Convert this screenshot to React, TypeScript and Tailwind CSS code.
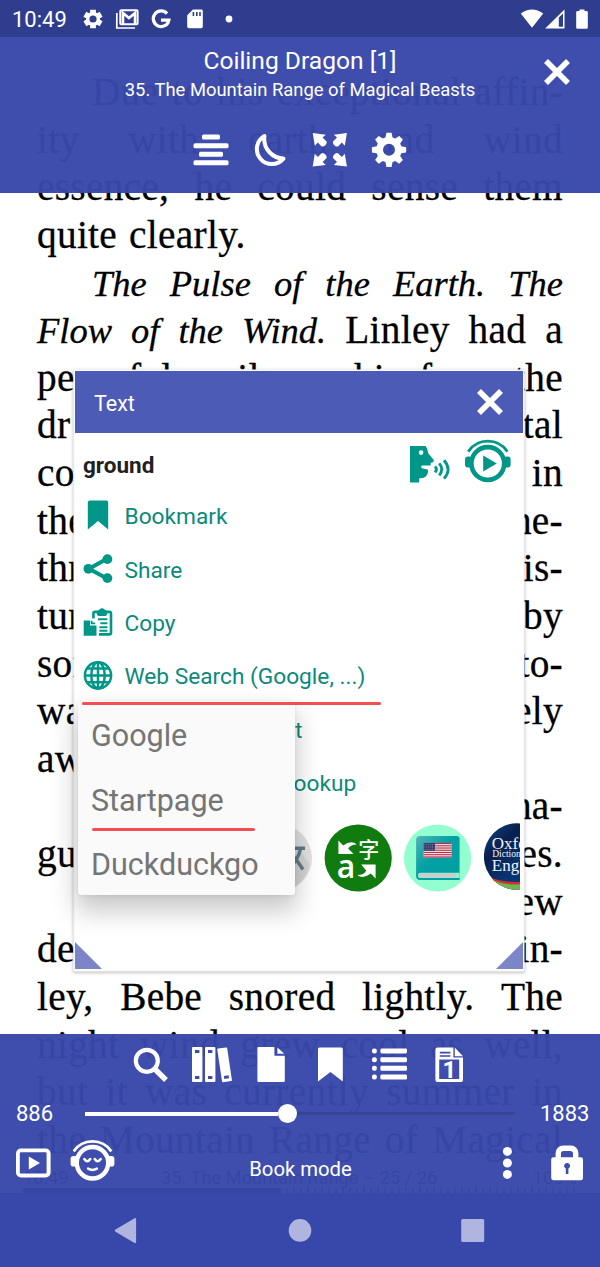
import React from "react";

type Kids = { children?: React.ReactNode };

/* Icon canvas whose origin is the middle of the box. */
function Icon({ w = 60, h = 50, children, className = "" }: Kids & { w?: number; h?: number; className?: string }) {
  return (
    <svg width={w} height={h} viewBox={`${-w / 2} ${-h / 2} ${w} ${h}`} fill="currentColor" className={`block shrink-0 ${className}`}>
      {children}
    </svg>
  );
}

function gearPath(teeth: number, outer: number, inner: number, topHalf: number, baseHalf: number) {
  const pts: string[] = [];
  for (let i = 0; i < teeth; i++) {
    const a = (i * 2 * Math.PI) / teeth - Math.PI / 2;
    const add = (r: number, d: number) => pts.push(`${(r * Math.cos(a + d)).toFixed(2)} ${(r * Math.sin(a + d)).toFixed(2)}`);
    add(inner, -baseHalf);
    add(outer, -topHalf);
    add(outer, topHalf);
    add(inner, baseHalf);
  }
  return `M${pts.join("L")}Z`;
}

function CloseIcon() {
  return (
    <Icon w={30} h={30}>
      <path d="M-11 -11L11 11M11 -11L-11 11" stroke="currentColor" strokeWidth="5.6" fill="none" />
    </Icon>
  );
}

function Headphones({ children }: Kids) {
  return (
    <>
      <circle cx="0" cy="2.5" r="16.4" fill="none" stroke="currentColor" strokeWidth="4.6" />
      <path d="M-19.6 -9.4A23.7 23.7 0 0 1 19.6 -9.4" fill="none" stroke="currentColor" strokeWidth="2.8" />
      <rect x="-22.8" y="-4.6" width="7" height="11" rx="3" />
      <rect x="15.8" y="-4.6" width="7" height="11" rx="3" />
      {children}
    </>
  );
}

const rowCls = "h-[47.625px] w-full flex justify-between whitespace-pre";

function Line({ text, indent, italic, last }: { text: string; indent?: boolean; italic?: boolean; last?: boolean }) {
  return (
    <div className={`${rowCls} ${indent ? "pl-[55px]" : ""} ${italic ? "text-[36.5px] italic tracking-normal" : ""} ${last ? "gap-[12px] !justify-start" : ""}`}>
      {text.split(" ").map((w, i) => (
        <span key={i}>{w}</span>
      ))}
    </div>
  );
}

function BookPage() {
  return (
    <div className="flex h-[1267px] w-[600px] flex-col bg-white pl-[37px] pr-[37px] pt-[69px] font-['Liberation_Serif',serif] text-[39.3px] leading-[47.625px] tracking-[0.3px] text-black [-webkit-text-stroke:0.3px_black]">
      <Line text="Due to his exceptional affin-" indent />
      <Line text="ity with earth and wind" />
      <Line text="essence, he could sense them" />
      <Line text="quite clearly." last />
      <Line text="The Pulse of the Earth. The" indent italic />
      <div className={rowCls}>
        {["Flow", "of", "the", "Wind."].map((w) => (
          <span key={w} className="text-[36.5px] italic tracking-normal">{w}</span>
        ))}
        <span>Linley</span>
        <span>had</span>
        <span>a</span>
      </div>
      <Line text="peaceful smile on his face, the" />
      <Line text="dr tal" />
      <Line text="co in" />
      <Line text="the ne-" />
      <Line text="thr is-" />
      <Line text="tur by" />
      <Line text="son to-" />
      <Line text="wa ely" />
      <Line text="aw" />
      <Line text=" na-" />
      <Line text="gu es." />
      <Line text=" ew" />
      <Line text="de in-" />
      <Line text="ley, Bebe snored lightly. The" />
      <Line text="night wind grew cool as well," />
      <Line text="but it was currently summer in" />
      <Line text="the Mountain Range of Magical" />
      <div className="relative -ml-[14px] -mr-[14px] mt-[3px] flex justify-between font-['Roboto',sans-serif] text-[18.3px] leading-[22px] tracking-normal [-webkit-text-stroke:0px]">
        <span>10:49</span>
        <span className="pr-[3px]">35. The Mountain Range – 25 / 26</span>
        <span>100%</span>
      </div>
      <div className="-ml-[14px] -mr-[14px] mt-[-1px] flex h-[6px] items-end">
        <div className="h-full w-[258px] bg-black" />
        <div className="h-full flex-1 bg-[repeating-linear-gradient(90deg,transparent_0,transparent_5px,#555_5px,#555_7px)]" />
      </div>
    </div>
  );
}

function StatusBar() {
  return (
    <div className="flex h-[37px] shrink-0 items-center bg-[#2f3d8f] pl-[12px] text-[22px] leading-[37px] text-white">
      <span className="w-[66px] pt-[1px]">10:49</span>
      <Icon w={30} h={30}>
        <path fillRule="evenodd" d={gearPath(6, 9.8, 7, 0.3, 0.42) + "M-3.6 0a3.6 3.6 0 1 0 7.2 0a3.6 3.6 0 1 0 -7.2 0Z"} />
      </Icon>
      <Icon w={40} h={30} className="-ml-[1px]">
        <path d="M-10.2 -6V9H8" fill="none" stroke="currentColor" strokeWidth="1.7" />
        <rect x="-6.7" y="-8.7" width="17.3" height="14" rx="1" fill="none" stroke="currentColor" strokeWidth="2" />
        <path d="M-4 5V-6L2 -1L8 -6V5" fill="none" stroke="currentColor" strokeWidth="2.6" />
      </Icon>
      <Icon w={30} h={30} className="-ml-[1px]">
        <path d="M6 -5.4A7.8 7.8 0 1 0 7.8 1.2H0" fill="none" stroke="currentColor" strokeWidth="3.3" />
      </Icon>
      <Icon w={30} h={30} className="ml-[4px]">
        <path fillRule="evenodd" d="M-2 -9.5H6.4a1.4 1.4 0 0 1 1.4 1.4V7.6a1.6 1.6 0 0 1 -1.6 1.6H-6.2a1.6 1.6 0 0 1 -1.6 -1.6V-3.8ZM-2.4 -7V-3H-.8V-7ZM1 -7V-3H2.6V-7ZM4.2 -7V-3H5.8V-7Z" />
      </Icon>
      <Icon w={20} h={20} className="ml-[9px]">
        <circle r="3.4" />
      </Icon>
      <span className="flex-1" />
      <Icon w={24} h={24} className="-mr-[1px]">
        <path d="M0 8.8L-11.2 -5.4Q0 -13.6 11.2 -5.4Z" />
      </Icon>
      <Icon w={24} h={24} className="mr-[7px]">
        <path fillRule="evenodd" d="M9.5 -9.5V9.5H-9.8ZM3.8 -1.5V7.8H8V-5.6Z" />
      </Icon>
      <Icon w={16} h={24} className="mr-[10px]">
        <path d="M-2.5 -9.6H2.5V-8H4.5a1.3 1.3 0 0 1 1.3 1.3V8.5a1.3 1.3 0 0 1 -1.3 1.3H-4.5a1.3 1.3 0 0 1 -1.3 -1.3V-6.7A1.3 1.3 0 0 1 -4.5 -8H-2.5Z" />
      </Icon>
    </div>
  );
}

const arrow = "M-17.3 -17L-4.2 -15.3L-7.4 -12.4L-3.4 -8.4Q-3 -7 -4 -5.6Q-6.4 -2.8 -8.4 -3.6L-12.2 -7.4L-15.2 -4.2Z";

function TopBar() {
  return (
    <div className="relative h-[155.5px] shrink-0 bg-[rgba(57,72,169,0.967)] pt-[8px] text-center text-white">
      <div className="text-[24.6px] leading-[32px]">Coiling Dragon [1]</div>
      <div className="pt-[2px] text-[18.4px] leading-[22px]">35. The Mountain Range of Magical Beasts</div>
      <div className="mt-[24px] flex justify-center">
        <Icon>
          <rect x="-8" y="-15.5" width="18" height="5" rx="1.5" />
          <rect x="-16.5" y="-6.8" width="35" height="5" rx="1.5" />
          <rect x="-11" y="1.7" width="24" height="5" rx="1.5" />
          <rect x="-16.5" y="10.3" width="35" height="5" rx="1.5" />
        </Icon>
        <Icon>
          <path d="M-5.6 -14A15 15 0 1 0 13.4 8.6C4 8.4 -7.4 0 -5.6 -14Z" fill="none" stroke="currentColor" strokeWidth="4" strokeLinejoin="round" />
        </Icon>
        <Icon>
          <path d={arrow} />
          <path d={arrow} transform="translate(-.4 0) scale(-1 1)" />
          <path d={arrow} transform="translate(0 -.4) scale(1 -1)" />
          <path d={arrow} transform="translate(-.4 -.4) scale(-1 -1)" />
        </Icon>
        <Icon>
          <path transform="translate(-1 -.2)" fillRule="evenodd" d={gearPath(8, 17.3, 12.8, 0.15, 0.28) + "M-6 0a6 6 0 1 0 12 0a6 6 0 1 0 -12 0Z"} />
        </Icon>
      </div>
      <div className="absolute right-[28px] top-[20px]">
        <CloseIcon />
      </div>
    </div>
  );
}

const bookSpine = "M-17 -18h8.4a1 1 0 0 1 1 1V16a1 1 0 0 1 -1 1H-17a1 1 0 0 1 -1 -1V-17a1 1 0 0 1 1 -1ZM-15 -15v3h4.4v-3ZM-15 11v3h4.4v-3Z";

function BottomBar() {
  return (
    <div className="flex h-[159.5px] shrink-0 flex-col bg-[rgba(57,72,169,0.967)] text-white">
      <div className="flex justify-center pt-[6px]">
        <Icon>
          <circle cx="-3.2" cy="-4.2" r="11" fill="none" stroke="currentColor" strokeWidth="4.2" />
          <path d="M5 4.3L16 15" stroke="currentColor" strokeWidth="5.4" />
        </Icon>
        <Icon>
          <path fillRule="evenodd" d={bookSpine} />
          <path fillRule="evenodd" transform="translate(13 0)" d={bookSpine} />
          <path fillRule="evenodd" d="M-4 -17H4a1 1 0 0 1 1 1V16a1 1 0 0 1 -1 1H-4a1 1 0 0 1 -1 -1V-16a1 1 0 0 1 1 -1ZM-2.4 11v3h4.8v-3Z" transform="translate(14.6 -.2) rotate(-8.5)" />
        </Icon>
        <Icon>
          <path d="M-11.6 -18H4.4V-9.2H14.8V16a1 1 0 0 1 -1 1H-11.6a1 1 0 0 1 -1 -1V-17a1 1 0 0 1 1 -1ZM7.4 -17.6L14.2 -11.2H7.4Z" />
        </Icon>
        <Icon>
          <path d="M-10.6 -17.5H11.2a1.6 1.6 0 0 1 1.6 1.6V16.5L.4 7L-12 16.5V-15.9A1.6 1.6 0 0 1 -10.6 -17.5Z" />
        </Icon>
        <Icon>
          {[-16.6, -7.8, 0.8, 9.6].map((y) => (
            <g key={y}>
              <rect x="-18" y={y} width="4.8" height="5" rx="2" />
              <rect x="-9.6" y={y} width="26.6" height="5" rx="1.4" />
            </g>
          ))}
        </Icon>
        <Icon>
          <path fillRule="evenodd" d="M-12.6 -17.5H3.4V-7.6H13V15a2 2 0 0 1 -2 2H-12.6a2 2 0 0 1 -2 -2V-15.5a2 2 0 0 1 2 -2ZM-10.2 -13.2v1.6H.4v-1.6ZM-10.2 -9.8v1.6H.4v-1.6ZM-10.8 -5.6V14H9.2V-5.6Z" />
          <path d="M4.8 -17.5L13 -8.8H4.8Z" />
          <text x="-7.6" y="13" className="font-['Roboto',sans-serif] text-[24px] font-bold">1</text>
        </Icon>
      </div>
      <div className="flex h-[48px] items-center text-[22px] leading-[28px]">
        <span className="w-[85px] pl-[16px] pt-[1px]">886</span>
        <div className="flex w-[430px] items-center">
          <div className="h-[4px] w-[193px] bg-white" />
          <div className="h-[19px] w-[19px] rounded-full bg-white" />
          <div className="h-[3px] flex-1 bg-[#3a4494]" />
        </div>
        <span className="w-[85px] pl-[25px] pt-[1px]">1883</span>
      </div>
      <div className="flex h-[55px]">
        <Icon w={66} h={50}>
          <path fillRule="evenodd" d="M-12 -14.5H12.6a5 5 0 0 1 5 5V9.5a5 5 0 0 1 -5 5H-12a5 5 0 0 1 -5 -5V-9.5a5 5 0 0 1 5 -5ZM-12 -10.8a1.2 1.2 0 0 0 -1.2 1.2V9.4a1.2 1.2 0 0 0 1.2 1.2H12.4a1.2 1.2 0 0 0 1.2 -1.2V-9.6a1.2 1.2 0 0 0 -1.2 -1.2Z" />
          <path d="M-4.2 -6.4L7 0L-4.2 6.4Z" />
        </Icon>
        <Icon w={54} h={50}>
          <g transform="translate(-.5 -2.6) scale(.96)">
            <Headphones>
              <path d="M-8.5 -1.4q3 4.6 6.2 0M2.3 -1.4q3 4.6 6.2 0M-4.6 8.6Q0 11.2 4.6 8.6" fill="none" stroke="currentColor" strokeWidth="2.6" strokeLinecap="round" />
            </Headphones>
          </g>
        </Icon>
        <span className="w-[361px] pt-[17.5px] text-center text-[20.3px] leading-[28px]">Book mode</span>
        <Icon w={54} h={50}>
          <circle cx="-.6" cy="-11.6" r="4.5" />
          <circle cx="-.6" cy="0" r="4.5" />
          <circle cx="-.6" cy="11.4" r="4.5" />
        </Icon>
        <Icon w={64} h={50}>
          <path fillRule="evenodd" d="M-13.6 -5.8H-11.4V-10a7.5 7.5 0 0 1 7.5 -7.6H3.9a7.5 7.5 0 0 1 7.5 7.6V-5.8H13.8a2.2 2.2 0 0 1 2.2 2.2V15a2.2 2.2 0 0 1 -2.2 2.2H-13.6A2.2 2.2 0 0 1 -15.8 15V-3.6A2.2 2.2 0 0 1 -13.6 -5.8ZM-6 -5.8H6V-9.4a2.6 2.6 0 0 0 -2.6 -2.6H-3.4A2.6 2.6 0 0 0 -6 -9.4ZM-1.2 5.6V11H1.4V5.6a3 3 0 1 0 -2.6 0Z" />
        </Icon>
      </div>
    </div>
  );
}

function NavBar() {
  return (
    <div className="flex h-[74px] shrink-0 bg-[#3748aa] text-[#b0b5e0]">
      <Icon w={250} h={74}>
        <path d="M-9.5 -.6L9.6 -11.8a1 1 0 0 1 1.5 .9V12a1 1 0 0 1 -1.5 .9L-9.5 1.8a1.4 1.4 0 0 1 0 -2.4Z" />
      </Icon>
      <Icon w={100} h={74}>
        <circle cy=".4" r="11.3" />
      </Icon>
      <Icon w={245} h={74}>
        <rect x="-11.3" y="-11" width="23" height="23" rx="1.5" />
      </Icon>
    </div>
  );
}

function MenuRow({ icon, label }: { icon: React.ReactNode; label: string }) {
  return (
    <div className="flex h-[53.4px] items-center pl-[7.5px] text-[#0b8a7b]">
      <Icon w={30} h={34} className="text-[#009688]">{icon}</Icon>
      <span className="pl-[12px] pt-[2px] text-[22.7px] leading-[30px]">{label}</span>
    </div>
  );
}

function Dictionaries() {
  return (
    <div className="ml-[169px] flex h-[70px] w-[276px] overflow-hidden">
      <Icon w={80} h={70}>
        <g transform="translate(-5.5 0)">
          <circle r="33.5" fill="#e2e2e2" />
          <path d="M20 -9L31 6A33.5 33.5 0 0 1 12 31L0 20Z" fill="#d4d4d4" />
          <path d="M8 -9.8H26.5M22 -9Q20 2 8 13M16 -1L24.5 11.5" fill="none" stroke="#607d8b" strokeWidth="3.4" />
        </g>
      </Icon>
      <Icon w={80} h={70}>
        <g transform="translate(-5.8 0)">
          <circle r="33.6" fill="#107c10" />
          <path d="M-19.8 -17.5L-15 -12.4Q-7 -18.4 -1.4 -13.6Q-8.4 -13.4 -10 -9.4L-4.6 -4H-19.8Z" fill="#fff" />
          <path d="M17.4 20.5L12.6 15.6Q5 21.4 -1 17Q6.8 16.5 8 12.4L3 6.5H17.4Z" fill="#fff" />
          <text x="-21.4" y="20" fill="#fff" className="font-['Open_Sans',sans-serif] text-[32px] font-semibold">a</text>
          <text x="0" y="-1" fill="#fff" className="font-['Noto_Sans_CJK_SC',sans-serif] text-[21px] font-medium">字</text>
        </g>
      </Icon>
      <Icon w={80} h={70}>
        <defs>
          <linearGradient id="cover" x1="0" y1="0" x2="1" y2="1">
            <stop offset="0" stopColor="#51b4b5" />
            <stop offset=".45" stopColor="#00a0a3" />
          </linearGradient>
        </defs>
        <g transform="translate(-6.4 0)">
          <circle r="33.6" fill="#93ffd0" />
          <path d="M-17.5 -22H19a3 3 0 0 1 3 3V14H22V22H-17.5a4 4 0 0 1 -4 -4V-18A4 4 0 0 1 -17.5 -22Z" fill="url(#cover)" />
          <path d="M-17 14.8H22V20H-17a2.6 2.6 0 0 1 0 -5.2Z" fill="#8ef5cd" />
          <path d="M-17 15.2H18.5V19.6H-17a2.2 2.2 0 0 1 0 -4.4Z" fill="#ccc" />
          <rect x="-14" y="-15" width="28" height="14.5" fill="#eee" />
          {[0, 1, 2, 3, 4, 5, 6].map((i) => (
            <rect key={i} x="-14" y={-15 + i * 2.23} width="28" height="1.12" fill="#c32b45" />
          ))}
          <rect x="-14" y="-15" width="11.3" height="7.8" fill="#3c3b6e" />
          {[0, 1, 2].map((r) => (
            <path key={r} d={`M-13 ${-13.4 + r * 2.4}H-3.4`} stroke="#aab" strokeWidth=".7" strokeDasharray=".8 1.1" />
          ))}
        </g>
      </Icon>
      <Icon w={80} h={70}>
        <defs>
          <clipPath id="badge">
            <circle r="33.3" />
          </clipPath>
          <linearGradient id="navy" x1="0" y1="0" x2="1" y2="1">
            <stop offset="0" stopColor="#12488a" />
            <stop offset=".3" stopColor="#081f4d" />
            <stop offset=".6" stopColor="#083574" />
          </linearGradient>
        </defs>
        <g transform="translate(-6.8 -1.4)">
          <g clipPath="url(#badge)">
            <rect x="-34" y="-34" width="68" height="68" fill="url(#navy)" />
            <path d="M-34 18Q-14 27 4 25V34H-34Z" fill="#d32f2f" />
            <path d="M-34 19Q-14 30 4 27.5V34H-34Z" fill="#6cb654" />
          </g>
          <g fill="#f2f5fa" className="font-['Liberation_Serif',serif]">
            <text x="-25.4" y="-8" className="text-[17px]">Oxford</text>
            <text x="-25" y="0" className="text-[9.5px]">Dictionary</text>
            <text x="-25.4" y="14.4" className="text-[17px]">English</text>
          </g>
        </g>
      </Icon>
    </div>
  );
}

function TextDialog() {
  return (
    <div className="absolute left-[75px] top-[371px] h-[599px] w-[448px] bg-white shadow-[0_0_0_1.5px_#fafafa,0_1px_3px_2px_rgba(0,0,0,0.24)]">
      <div className="flex h-[62px] items-center justify-between bg-[#4c5bb5] pl-[19px] pr-[18px] text-white">
        <span className="pt-[3px] text-[21.5px] leading-[30px]">Text</span>
        <CloseIcon />
      </div>
      <div className="flex h-[56.5px] items-center pl-[8px] text-[#009688]">
        <span className="flex-1 pt-[8px] text-[22.5px] font-bold leading-[30px] text-[#212121]">ground</span>
        <Icon w={54} h={50} className="mr-[7px]">
          <path fillRule="evenodd" d="M-19 -15H-3.4Q-1.2 -12 -.6 -7.4L4.8 -1Q5.2 1.4 1.6 1.8V4.4H-7Q-8.8 5.6 -7 7.2L-1.4 8.4Q-.6 9.8 -1.2 12Q-2.6 16.8 -7.8 17.2H-9.8V21.4H-19ZM-10.2 -8.4a2.3 2.3 0 1 0 4.6 0a2.3 2.3 0 1 0 -4.6 0Z" />
          <path d="M6 5.4q2.8 3 0 6M10.2 2.4q5.2 6 0 12M15 -.8Q23.2 8.4 15 17.6" fill="none" stroke="currentColor" strokeWidth="2.8" />
        </Icon>
        <Icon w={50} h={50} className="mr-[11px] -ml-[1px]">
          <g transform="translate(.8 0)">
            <Headphones>
              <path d="M-4.6 -5.4L9 2.5L-4.6 10.4Z" />
            </Headphones>
          </g>
        </Icon>
      </div>
      <MenuRow label="Bookmark" icon={<path d="M-8.2 -15.5H8.2a2 2 0 0 1 2 2V13.6L0 5L-10.2 13.6V-13.5A2 2 0 0 1 -8.2 -15.5Z" />} />
      <MenuRow
        label="Share"
        icon={
          <g transform="translate(0 -1.2)">
            <path d="M9 -10L-9 0L9 9.6" fill="none" stroke="currentColor" strokeWidth="4" />
            <circle cx="9.4" cy="-9.7" r="4.9" />
            <circle cx="-9.6" cy="0" r="4.9" />
            <circle cx="9.4" cy="9.3" r="4.9" />
          </g>
        }
      />
      <MenuRow
        label="Copy"
        icon={
          <g transform="translate(0 -.2)">
            <path d="M-14.3 -2.4H-8V2.6H-1.5V13H-14.3Z" />
            <path d="M-6.4 -2V.6H-2.8" fill="none" stroke="currentColor" strokeWidth="1.8" />
            <path d="M-4.6 -4.4V-9.3a1.6 1.6 0 0 1 1.6 -1.6H11.4a1.6 1.6 0 0 1 1.6 1.6V10a1.6 1.6 0 0 1 -1.6 1.6H1" fill="none" stroke="currentColor" strokeWidth="2.6" />
            <path d="M-1.4 -10.4Q.6 -13.4 1.8 -13.6a2.8 2.8 0 0 1 4.4 0Q7.6 -13.4 9.4 -10.4Q9.4 -7.4 7.4 -6.8H.6Q-1.4 -7.4 -1.4 -10.4Z" />
            <path d="M0 -3.6H9.4M2.4 .4H9.4M1.4 4.4H9.4M1.4 8H9.4" stroke="currentColor" strokeWidth="1.9" />
          </g>
        }
      />
      <MenuRow
        label="Web Search (Google, ...)"
        icon={
          <g fill="none" stroke="currentColor" strokeWidth="2.5" transform="translate(0 -.6)">
            <circle r="13.1" />
            <ellipse rx="6.7" ry="13.1" />
            <path d="M0 -13V13M-13 0H13M-11.2 -6.8H11.2M-11.2 6.8H11.2" />
          </g>
        }
      />
      <div className="flex h-[53.4px] items-center pl-[220px] pt-[2px] text-[22.7px] leading-[30px] text-[#0b8a7b]">t</div>
      <div className="flex h-[53.4px] items-center pl-[218.5px] pt-[2px] text-[22.7px] leading-[30px] text-[#0b8a7b]">ookup</div>
      <div className="pt-[13px]">
        <Dictionaries />
      </div>
      <svg width="27" height="27" className="absolute bottom-[1px] left-0">
        <path d="M0 0L27 27H0Z" fill="#7b85c8" />
      </svg>
      <svg width="27" height="27" className="absolute bottom-[1px] right-0">
        <path d="M27 0V27H0Z" fill="#7b85c8" />
      </svg>
    </div>
  );
}

function EnginePopup() {
  return (
    <>
      <div className="absolute left-[78px] top-[701px] flex h-[194px] w-[217px] flex-col rounded-[3px] bg-[#fafafa] pl-[13px] pt-[3px] text-[30.5px] leading-[64.5px] text-[#757575] shadow-[0_14px_26px_2px_rgba(0,0,0,0.22),0_1px_4px_rgba(0,0,0,0.08)]">
        <span>Google</span>
        <span>Startpage</span>
        <span>Duckduckgo</span>
      </div>
      <div className="absolute left-[82px] top-[702px] h-[3px] w-[299px] rounded-full bg-[#f44e4e]" />
      <div className="absolute left-[92px] top-[828px] h-[3px] w-[163px] rounded-full bg-[#f44e4e]" />
    </>
  );
}

export default function App() {
  return (
    <div className="relative h-[1267px] w-[600px] overflow-hidden bg-white font-['Roboto',sans-serif]">
      <BookPage />
      <div className="absolute inset-0 flex flex-col">
        <StatusBar />
        <TopBar />
        <div className="flex-1" />
        <BottomBar />
        <NavBar />
      </div>
      <TextDialog />
      <EnginePopup />
    </div>
  );
}
